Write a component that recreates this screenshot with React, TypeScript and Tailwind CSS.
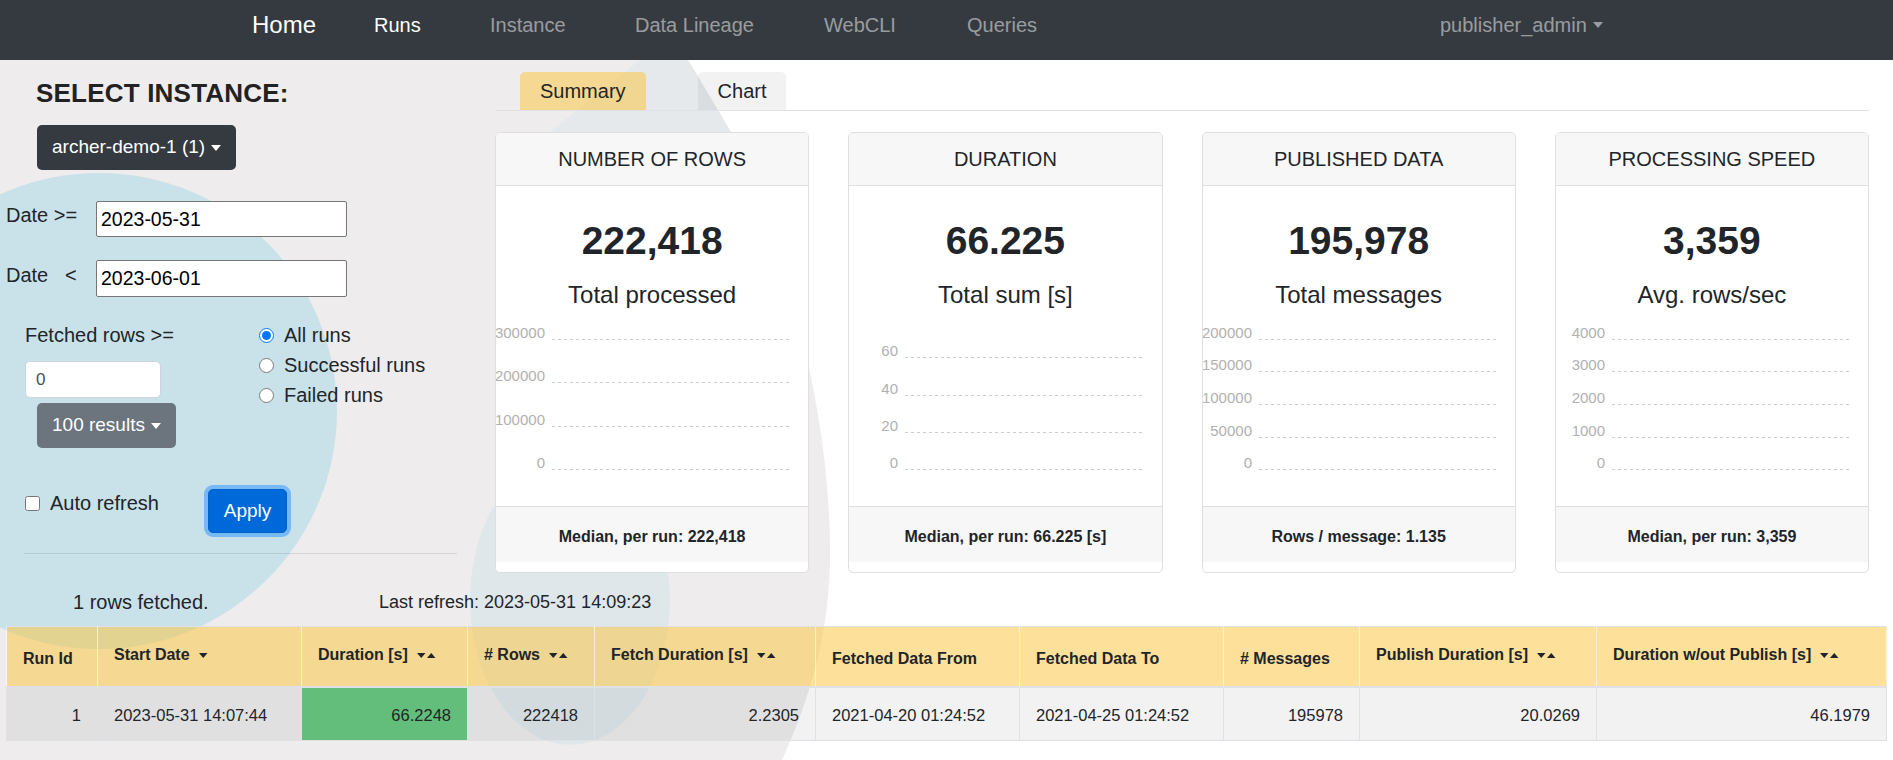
import React from "react";

type Tick = { label: string; y: number };

interface Stat {
  title: string;
  value: string;
  caption: string;
  footer: string;
  ticks: Tick[];
}

const stats: Stat[] = [
  {
    title: "NUMBER OF ROWS",
    value: "222,418",
    caption: "Total processed",
    footer: "Median, per run: 222,418",
    ticks: [
      { label: "300000", y: 29 },
      { label: "200000", y: 72 },
      { label: "100000", y: 116 },
      { label: "0", y: 159 },
    ],
  },
  {
    title: "DURATION",
    value: "66.225",
    caption: "Total sum [s]",
    footer: "Median, per run: 66.225 [s]",
    ticks: [
      { label: "60", y: 47 },
      { label: "40", y: 85 },
      { label: "20", y: 122 },
      { label: "0", y: 159 },
    ],
  },
  {
    title: "PUBLISHED DATA",
    value: "195,978",
    caption: "Total messages",
    footer: "Rows / message: 1.135",
    ticks: [
      { label: "200000", y: 29 },
      { label: "150000", y: 61 },
      { label: "100000", y: 94 },
      { label: "50000", y: 127 },
      { label: "0", y: 159 },
    ],
  },
  {
    title: "PROCESSING SPEED",
    value: "3,359",
    caption: "Avg. rows/sec",
    footer: "Median, per run: 3,359",
    ticks: [
      { label: "4000", y: 29 },
      { label: "3000", y: 61 },
      { label: "2000", y: 94 },
      { label: "1000", y: 127 },
      { label: "0", y: 159 },
    ],
  },
];

type Column = {
  label: string;
  width: string;
  sort: "none" | "desc" | "both";
};

const columns: Column[] = [
  { label: "Run Id", width: "w-[91px]", sort: "none" },
  { label: "Start Date", width: "w-[204px]", sort: "desc" },
  { label: "Duration [s]", width: "w-[166px]", sort: "both" },
  { label: "# Rows", width: "w-[127px]", sort: "both" },
  { label: "Fetch Duration [s]", width: "w-[221px]", sort: "both" },
  { label: "Fetched Data From", width: "w-[204px]", sort: "none" },
  { label: "Fetched Data To", width: "w-[204px]", sort: "none" },
  { label: "# Messages", width: "w-[136px]", sort: "none" },
  { label: "Publish Duration [s]", width: "w-[237px]", sort: "both" },
  { label: "Duration w/out Publish [s]", width: "w-[290px]", sort: "both" },
];

type Cell = { value: string; className: string };

const row: Cell[] = [
  { value: "1", className: "text-right" },
  { value: "2023-05-31 14:07:44", className: "text-left" },
  { value: "66.2248", className: "text-right bg-[#63be7b]" },
  { value: "222418", className: "text-right" },
  { value: "2.2305", className: "text-right" },
  { value: "2021-04-20 01:24:52", className: "text-left" },
  { value: "2021-04-25 01:24:52", className: "text-left" },
  { value: "195978", className: "text-right" },
  { value: "20.0269", className: "text-right" },
  { value: "46.1979", className: "text-right" },
];

const Caret = () => (
  <span className="ml-[6px] inline-block h-0 w-0 border-x-[5px] border-t-[6px] border-x-transparent border-t-current"></span>
);

const SortIcon = ({ both }: { both: boolean }) => (
  <svg
    width={both ? 19 : 9}
    height="8"
    viewBox={both ? "0 0 19 8" : "0 0 9 8"}
    className="ml-[9px] inline-block shrink-0"
  >
    <path d="M0 2h8.5l-4.25 5z" fill="#212529" />
    {both && <path d="M10 7h8.5l-4.25-5z" fill="#212529" />}
  </svg>
);

// soft blobs behind the page
const Backdrop = () => (
  <svg
    className="pointer-events-none absolute left-0 top-0"
    width="1893"
    height="760"
    viewBox="0 0 1893 760"
  >
    <path
      d="M0 60 H688 C770 190 832 390 830 560 C829 650 800 720 782 760 H0 Z"
      fill="#eeeced"
    />
    <path d="M640 60 H688 L736 140 H540 Z" fill="#e6e9eb" />
    <ellipse cx="570" cy="600" rx="100" ry="145" fill="#e0e7ea" />
    <circle cx="99" cy="411" r="238" fill="#c9e2e9" />
  </svg>
);

const NavBar = () => (
  <nav className="flex h-[60px] items-start bg-[#343a40] pl-[252px] pt-[10px] text-[20px] leading-[30px] text-white/50">
    <span className="w-[122px] text-[24px] text-white">Home</span>
    <span className="w-[116px] text-white">Runs</span>
    <span className="w-[145px]">Instance</span>
    <span className="w-[189px]">Data Lineage</span>
    <span className="w-[143px]">WebCLI</span>
    <span className="w-[473px]">Queries</span>
    <span className="flex items-center">
      publisher_admin
      <Caret />
    </span>
  </nav>
);

const FilterPanel = () => (
  <div className="w-[495px] shrink-0 text-[20px]">
    <h2 className="ml-[36px] mt-[17px] text-[26px] font-bold leading-[32px] tracking-[0.2px] text-[#222]">
      SELECT INSTANCE:
    </h2>
    <button className="ml-[37px] mt-[16px] flex h-[45px] items-center rounded-[5px] bg-[#343a40] px-[15px] text-[19px] text-white">
      archer-demo-1 (1)
      <Caret />
    </button>

    <div className="mt-[30px] flex items-start">
      <label className="w-[96px] pl-[6px] leading-[30px]">Date &gt;=</label>
      <input
        className="mt-[1px] h-[36px] w-[251px] rounded-[2px] border border-[#767676] bg-white px-[4px] text-[19.5px] text-black"
        defaultValue="2023-05-31"
      />
    </div>
    <div className="mt-[23px] flex items-start">
      <label className="w-[96px] pl-[6px] leading-[30px]">
        Date&nbsp;&nbsp;&nbsp;&lt;
      </label>
      <input
        className="h-[37px] w-[251px] rounded-[2px] border border-[#767676] bg-white px-[4px] text-[19.5px] text-black"
        defaultValue="2023-06-01"
      />
    </div>

    <div className="mt-[23px] flex">
      <div className="w-[259px] pl-[25px]">
        <div className="leading-[30px]">Fetched rows &gt;=</div>
        <input
          className="mt-[11px] block h-[37px] w-[136px] rounded-[5px] border border-[#ced4da] bg-white px-[10px] text-[17px] text-[#495057]"
          defaultValue="0"
        />
        <button className="ml-[12px] mt-[5px] flex h-[45px] items-center rounded-[5px] bg-[#6c757d] px-[15px] text-[19px] text-white">
          100 results
          <Caret />
        </button>
      </div>
      <div className="flex flex-col">
        {["All runs", "Successful runs", "Failed runs"].map((label, i) => (
          <label key={label} className="flex h-[30px] items-center">
            <input
              type="radio"
              name="runs"
              defaultChecked={i === 0}
              className="mr-[10px] h-[15px] w-[15px]"
            />
            {label}
          </label>
        ))}
      </div>
    </div>

    <div className="mt-[40px] flex items-start pl-[25px]">
      <label className="flex h-[30px] w-[183px] items-center">
        <input type="checkbox" className="mr-[10px] h-[15px] w-[15px]" />
        Auto refresh
      </label>
      <button className="mt-[1px] h-[44px] w-[79px] rounded-[5px] border border-[#0062cc] bg-[#0069d9] text-[19px] text-white shadow-[0_0_0_4px_rgba(38,143,255,0.5)]">
        Apply
      </button>
    </div>

    <div className="ml-[24px] mt-[20px] w-[433px] border-t border-black/10"></div>
  </div>
);

const StatCard = ({ stat }: { stat: Stat }) => (
  <div className="overflow-hidden rounded-[5px] border border-[#dfdfdf] bg-white">
    <div className="h-[53px] border-b border-[#dfdfdf] bg-[#f7f7f7] text-center text-[20px] leading-[53px]">
      {stat.title}
    </div>
    <div className="h-[320px] pt-[31px] text-center">
      <div className="text-[39px] font-bold leading-[48px]">{stat.value}</div>
      <div className="mt-[15px] text-[24px] leading-[30px]">{stat.caption}</div>
      <svg className="block" width="100%" height="196">
        {stat.ticks.map((t) => (
          <g key={t.label}>
            <text
              x="49"
              y={t.y - 1}
              textAnchor="end"
              fontSize="15"
              fill="#b1b1b1"
              fontFamily="'Liberation Sans', Arial, sans-serif"
            >
              {t.label}
            </text>
            <line
              x1="56"
              x2="293"
              y1={t.y + 0.5}
              y2={t.y + 0.5}
              stroke="#cdcdcd"
              strokeDasharray="3 3"
            />
          </g>
        ))}
      </svg>
    </div>
    <div className="h-[56px] border-t border-[#dfdfdf] bg-[#f7f7f7] pt-[7px] text-center text-[16px] font-bold leading-[46px]">
      {stat.footer}
    </div>
    <div className="h-[10px]"></div>
  </div>
);

const SummaryPanel = () => (
  <div className="mr-[24px] flex-1">
    <div className="mt-[12px] flex items-end gap-[52px] border-b border-[#dee2e6] pl-[25px] text-[20px]">
      <div className="h-[38px] rounded-t-[5px] bg-[#fbc337]/50 px-[20px] leading-[38px]">
        Summary
      </div>
      <div className="h-[38px] rounded-t-[5px] bg-black/5 px-[20px] leading-[38px]">
        Chart
      </div>
    </div>
    <div className="mt-[21px] grid grid-cols-4 gap-[39px]">
      {stats.map((s) => (
        <StatCard key={s.title} stat={s} />
      ))}
    </div>
  </div>
);

const RunsTable = () => (
  <table className="ml-[6px] w-[1880px] table-fixed border-collapse">
    <thead>
      <tr className="bg-[#fbc337]/50">
        {columns.map((c) => (
          <th
            key={c.label}
            className={`${c.width} h-[60px] border-x border-b-2 border-t border-x-white/60 border-b-[#dee2e6] border-t-[#dee2e6] px-[16px] pt-[6px] text-left align-middle text-[16px] font-bold`}
          >
            {c.sort === "none" ? (
              c.label
            ) : (
              <span className="inline-flex items-center pb-[8px]">
                {c.label}
                <SortIcon both={c.sort === "both"} />
              </span>
            )}
          </th>
        ))}
      </tr>
    </thead>
    <tbody>
      <tr className="bg-black/5">
        {row.map((c, i) => (
          <td
            key={i}
            className={`h-[54px] border border-[#dee2e6] px-[16px] pt-[3px] text-[16.5px] ${c.className}`}
          >
            {c.value}
          </td>
        ))}
      </tr>
    </tbody>
  </table>
);

export default function App() {
  return (
    <div className="relative h-[760px] overflow-hidden bg-white font-['Liberation_Sans',Arial,sans-serif] text-[#212529]">
      <Backdrop />
      <div className="relative">
        <NavBar />
        <div className="flex">
          <FilterPanel />
          <SummaryPanel />
        </div>
        <div className="mt-[14px] flex h-[30px] items-center">
          <span className="w-[379px] pl-[73px] text-[20px]">1 rows fetched.</span>
          <span className="text-[18px]">Last refresh: 2023-05-31 14:09:23</span>
        </div>
        <div className="mt-[9px]">
          <RunsTable />
        </div>
      </div>
    </div>
  );
}
